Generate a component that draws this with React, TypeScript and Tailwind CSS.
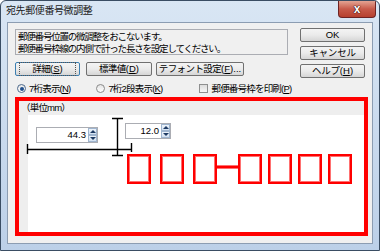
import clsx from 'clsx'
import { ReactNode } from 'react'

const font = "font-['Liberation_Sans','Noto_Sans_CJK_JP',sans-serif]"

function Key({ k }: { k: string }) {
  return <span className="underline underline-offset-1">{k}</span>
}

function Btn({ children, className, focus }: { children: ReactNode; className?: string; focus?: boolean }) {
  return (
    <div
      className={clsx(
        'h-[14px] flex items-center justify-center rounded-[2px] border bg-linear-to-b from-[#f4f4f4] via-[#ebebeb] to-[#d6d6d6] text-[9.5px] leading-none text-black whitespace-nowrap',
        focus ? 'border-[#3c7fb1]' : 'border-[#707070]',
        className,
      )}
    >
      {focus ? (
        <span className="px-[12px] py-[1px] outline-1 outline-dotted outline-[#555]">{children}</span>
      ) : (
        children
      )}
    </div>
  )
}

function Arrow({ up }: { up?: boolean }) {
  return (
    <div className="flex-1 flex items-center justify-center border border-[#9fb5cf] bg-linear-to-b from-[#eef4fb] to-[#d3e1f1]">
      <div
        className={clsx(
          'w-0 h-0 border-x-[3px] border-x-transparent',
          up ? 'border-b-[3px] border-b-[#1d3a63]' : 'border-t-[3px] border-t-[#1d3a63]',
        )}
      />
    </div>
  )
}

function Spin({ value, className }: { value: string; className: string }) {
  return (
    <div className={clsx('absolute h-[16px] flex border border-[#abadb3] bg-white', className)}>
      <div className="flex-1 text-right pr-[2px] text-[9.5px] leading-[14px] text-black">{value}</div>
      <div className="w-[9px] flex flex-col">
        <Arrow up />
        <Arrow />
      </div>
    </div>
  )
}

function PostBox() {
  return (
    <div className="w-[24px] h-[30px] border-2 border-[#ff0000]">
      <div className="w-full h-full border border-[#ff7070]" />
    </div>
  )
}

export default function App() {
  return (
    <div
      className={clsx(
        'w-[380px] h-[251px] flex flex-col border border-[#3a4d63] rounded-t-[6px] bg-linear-to-b from-[#d9e6f4] to-[#bcd0e8] overflow-hidden',
        font,
      )}
    >
      {/* Title bar */}
      <div className="h-[21px] flex justify-between">
        <div className="pl-[5px] pt-[4px] text-[10px] leading-[12px] text-[#1b1b1b] tracking-[-0.4px]">宛先郵便番号微調整</div>
        <div className="mr-[3px] w-[38px] h-[17px] rounded-b-[4px] border border-t-0 border-[#6e2323] bg-linear-to-b from-[#e3a393] via-[#c75a4a] to-[#b6402f] flex items-center justify-center">
          <span className="text-white font-bold text-[12px] leading-none [text-shadow:0_0_1px_#3a0a0a,0_0_1px_#3a0a0a,0_0_1px_#3a0a0a]">x</span>
        </div>
      </div>

      {/* Client area */}
      <div className="mx-[6px] mb-[6px] flex-1 border border-[#8c9db2] bg-[#f0f0f0] px-[7px] pt-[6px] flex flex-col text-black">
        <div className="flex">
          <div className="w-[273px] flex flex-col">
            <div className="h-[26px] border border-[#abadb3] bg-[#f0f0f0] pl-[2px] pt-[1px] text-[9.5px] leading-[12px] tracking-[-1.2px]">
              <div>郵便番号位置の微調整をおこないます。</div>
              <div>郵便番号枠線の内側で計った長さを設定してください。</div>
            </div>
            <div className="mt-[7px] flex">
              <Btn focus className="w-[65px]">
                <span className="tracking-[-0.6px]">詳細</span>(<Key k="S" />)
              </Btn>
              <Btn className="w-[66px] ml-[6px]">
                <span className="tracking-[-0.6px]">標準値</span>(<Key k="D" />)
              </Btn>
              <Btn className="w-[88px] ml-[4px]">
                <span className="tracking-[-0.6px]">テフォント設定</span>(<Key k="F" />)...
              </Btn>
            </div>
          </div>
          <div className="ml-[12px] -mt-[1px] w-[65px] flex flex-col gap-[4px]">
            <Btn>OK</Btn>
            <Btn>
              <span className="tracking-[-0.2px]">キャンセル</span>
            </Btn>
            <Btn>
              <span className="tracking-[-0.2px]">ヘルプ</span>(<Key k="H" />)
            </Btn>
          </div>
        </div>

        {/* Options row */}
        <div className="mt-[5px] h-[11px] flex items-center text-[9.5px] leading-none">
          <div className="ml-[2px] w-[9px] h-[9px] rounded-full border border-[#4d6a8c] bg-linear-to-b from-[#e6e6e6] to-[#ffffff] flex items-center justify-center">
            <div className="w-[4px] h-[4px] rounded-full bg-[#1f4e8c]" />
          </div>
          <span className="ml-[3px] tracking-[-0.8px]">
            7桁表示(<Key k="N" />)
          </span>
          <div className="ml-[26px] w-[9px] h-[9px] rounded-full border border-[#8a8a8a] bg-linear-to-b from-[#e4e4e4] to-[#ffffff]" />
          <span className="ml-[3px] tracking-[-0.8px]">
            7桁2段表示(<Key k="K" />)
          </span>
          <div className="ml-[37px] w-[9px] h-[9px] border border-[#8e8f8f] bg-linear-to-b from-[#dcdcdc] to-[#f6f6f6]" />
          <span className="ml-[3px] tracking-[-0.8px]">
            郵便番号枠を印刷(<Key k="P" />)
          </span>
        </div>

        {/* Preview frame */}
        <div className="relative mt-[3px] w-[353px] h-[139px] border-4 border-[#ff0000] flex flex-col">
          <div className="h-[14px] pl-[2px] text-[9.5px] leading-[14px] bg-[#eeeeee] tracking-[-0.8px]">（単位mm）</div>
          <div className="flex-1 flex">
            <div className="w-[9px] bg-[#eeeeee]" />
            <div className="flex-1 bg-white" />
          </div>

          <svg className="absolute inset-0" width="345" height="131">
            <g stroke="#000" strokeWidth="1.4">
              <line x1="98.5" y1="17" x2="98.5" y2="54" />
              <line x1="93" y1="17.5" x2="104" y2="17.5" />
              <line x1="93" y1="54.5" x2="104" y2="54.5" />
              <line x1="8" y1="48.5" x2="113" y2="48.5" />
              <line x1="8.5" y1="43" x2="8.5" y2="53" />
              <line x1="112.5" y1="42" x2="112.5" y2="51" />
            </g>
          </svg>

          <Spin value="44.3" className="left-[17px] top-[26px] w-[62px]" />
          <Spin value="12.0" className="left-[106px] top-[22px] w-[46px]" />

          <div className="absolute left-[108px] top-[53px] flex items-start">
            <PostBox />
            <div className="ml-[9px]">
              <PostBox />
            </div>
            <div className="ml-[9px]">
              <PostBox />
            </div>
            <div className="mt-[11px] w-[21px] h-[4px] bg-[#ff0000] border-y border-[#ff7070]" />
            <PostBox />
            <div className="ml-[6px]">
              <PostBox />
            </div>
            <div className="ml-[6px]">
              <PostBox />
            </div>
            <div className="ml-[6px]">
              <PostBox />
            </div>
          </div>
        </div>
      </div>
    </div>
  )
}
